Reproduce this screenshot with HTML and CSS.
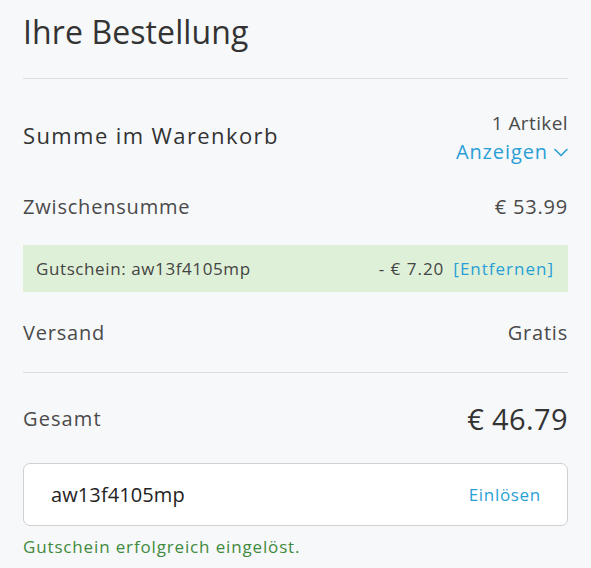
FILE: index.html
```html
<!DOCTYPE html>
<html lang="de">
<head>
<meta charset="utf-8">
<title>Ihre Bestellung</title>
<link rel="stylesheet" href="styles.css">
</head>
<body>
<main class="order">
  <h1 class="title">Ihre Bestellung</h1>
  <div class="rule"></div>
  <div class="row cart">
    <span class="cart-label">Summe im Warenkorb</span>
    <div class="cart-info">
      <span class="count">1 Artikel</span>
      <a class="toggle">Anzeigen
        <svg class="chev" width="14" height="9" viewBox="0 0 14 9"><path d="M1 1.5 L7 7.5 L13 1.5" fill="none" stroke="currentColor" stroke-width="1.6" stroke-linecap="round" stroke-linejoin="round"/></svg>
      </a>
    </div>
  </div>
  <div class="row sub">
    <span>Zwischensumme</span>
    <span>€ 53.99</span>
  </div>
  <div class="coupon">
    <span>Gutschein: aw13f4105mp</span>
    <span class="coupon-right"><span>- € 7.20</span><a class="link">[Entfernen]</a></span>
  </div>
  <div class="row ship">
    <span>Versand</span>
    <span>Gratis</span>
  </div>
  <div class="rule"></div>
  <div class="row total">
    <span class="total-label">Gesamt</span>
    <span class="total-value">€ 46.79</span>
  </div>
  <div class="code-box">
    <span class="code">aw13f4105mp</span>
    <a class="redeem">Einlösen</a>
  </div>
  <p class="success">Gutschein erfolgreich eingelöst.</p>
</main>
</body>
</html>
```
FILE: styles.css
```css
html, body {
  margin: 0;
  padding: 0;
  background: #f7f8fa;
}
body {
  font-family: "Open Sans", "Noto Sans", sans-serif;
  color: #4a4a4a;
}
.order {
  padding: 0 23px;
  display: flex;
  flex-direction: column;
}
.title {
  margin: 0;
  height: 78px;
  padding-top: 12px;
  box-sizing: border-box;
  font-size: 32px;
  font-weight: 400;
  color: #333;
  line-height: 40px;
  letter-spacing: 0.1px;
}
.rule {
  height: 1px;
  background: #dcdde0;
}
.row {
  display: flex;
  justify-content: space-between;
  align-items: center;
  font-size: 20px;
  letter-spacing: 0.8px;
}
.cart {
  height: 112px;
}
.cart-label {
  font-size: 22px;
  color: #333;
  letter-spacing: 1.4px;
}
.cart-info {
  display: flex;
  flex-direction: column;
  align-items: flex-end;
  margin-top: 6px;
}
.count {
  font-size: 19px;
  line-height: 28px;
  letter-spacing: 0.4px;
}
.toggle {
  color: #2a9fd6;
  font-size: 20px;
  line-height: 30px;
  display: flex;
  align-items: center;
  gap: 6px;
  letter-spacing: 0.9px;
}
.chev {
  margin-top: 1px;
}
.sub {
  height: 30px;
}
.coupon {
  margin-top: 24px;
  height: 47px;
  background: #dff0d8;
  display: flex;
  justify-content: space-between;
  align-items: center;
  padding: 0 14px 0 13px;
  font-size: 17px;
  color: #444;
  letter-spacing: 0.6px;
}
.coupon-right {
  display: flex;
  gap: 9px;
}
.coupon-right > span {
  letter-spacing: 1px;
}
.link {
  color: #2a9fd6;
  letter-spacing: 1px;
}
.ship {
  height: 80px;
}
.total {
  height: 90px;
}
.total-label {
  letter-spacing: 1.1px;
}
.total-value {
  font-size: 29px;
  color: #333;
  letter-spacing: 0.4px;
}
.code-box {
  height: 63px;
  box-sizing: border-box;
  background: #fff;
  border: 1px solid #cfd0d3;
  border-radius: 7px;
  display: flex;
  justify-content: space-between;
  align-items: center;
  padding: 0 26px 0 27px;
}
.code {
  font-size: 20px;
  color: #222;
  letter-spacing: 0.1px;
}
.redeem {
  font-size: 17px;
  color: #2a9fd6;
  letter-spacing: 0.7px;
}
.success {
  margin: 10px 0 0;
  font-size: 17px;
  line-height: 22px;
  color: #3f8a3c;
  letter-spacing: 0.85px;
}
```
